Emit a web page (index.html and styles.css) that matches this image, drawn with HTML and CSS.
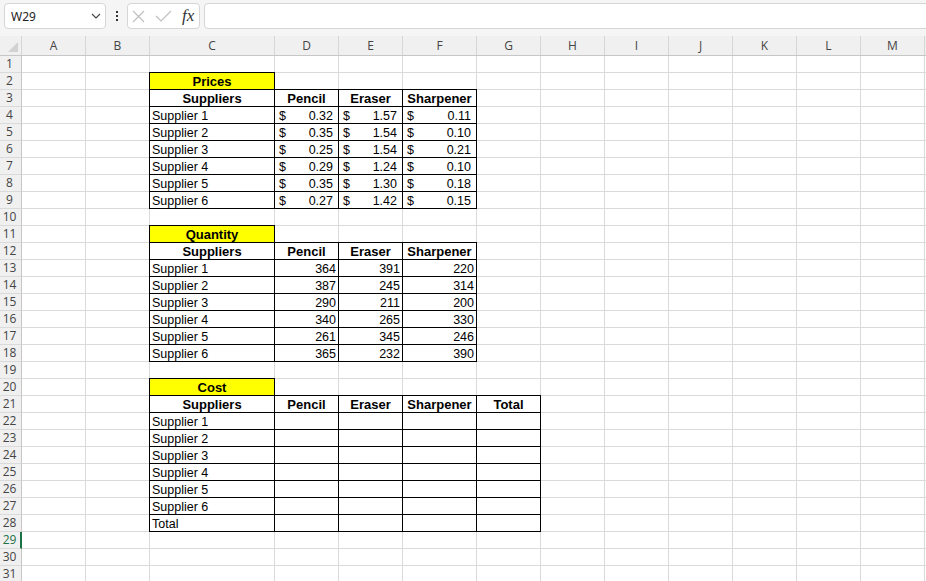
FILE: index.html
```html
<!DOCTYPE html>
<html lang="en">
<head>
<meta charset="utf-8">
<title>Suppliers</title>
<link rel="stylesheet" href="styles.css">
</head>
<body>
<div class="toolbar">
  <div class="namebox">
    <span class="ref">W29</span>
    <svg class="chev" width="10" height="6" viewBox="0 0 10 6"><path d="M1 1 L5 5 L9 1" fill="none" stroke="#444" stroke-width="1.1"/></svg>
  </div>
  <div class="kebab"><i></i><i></i><i></i></div>
  <div class="fxbox">
    <svg class="ico-x" width="13" height="13" viewBox="0 0 13 13"><path d="M1 1 L12 12 M12 1 L1 12" stroke="#bdbdbd" stroke-width="1.1" fill="none"/></svg>
    <svg class="ico-ok" width="17" height="12" viewBox="0 0 17 12"><path d="M1 6 L6 11 L16 1" stroke="#bdbdbd" stroke-width="1.1" fill="none"/></svg>
    <span class="fx">fx</span>
  </div>
  <div class="formula"></div>
</div>

<div class="colhead">
  <div class="corner"><svg width="21" height="19" viewBox="0 0 21 19"><polygon points="18,6 18,16 8,16" fill="#d2d2d2"/></svg></div>
  <div class="ch">A</div>
  <div class="ch">B</div>
  <div class="ch wide">C</div>
  <div class="ch">D</div>
  <div class="ch">E</div>
  <div class="ch mid">F</div>
  <div class="ch">G</div>
  <div class="ch">H</div>
  <div class="ch">I</div>
  <div class="ch">J</div>
  <div class="ch">K</div>
  <div class="ch">L</div>
  <div class="ch">M</div>
</div>

<div class="main">
  <div class="rowhead">
    <div class="rh">1</div><div class="rh">2</div><div class="rh">3</div><div class="rh">4</div>
    <div class="rh">5</div><div class="rh">6</div><div class="rh">7</div><div class="rh">8</div>
    <div class="rh">9</div><div class="rh">10</div><div class="rh">11</div><div class="rh">12</div>
    <div class="rh">13</div><div class="rh">14</div><div class="rh">15</div><div class="rh">16</div>
    <div class="rh">17</div><div class="rh">18</div><div class="rh">19</div><div class="rh">20</div>
    <div class="rh">21</div><div class="rh">22</div><div class="rh">23</div><div class="rh">24</div>
    <div class="rh">25</div><div class="rh">26</div><div class="rh">27</div><div class="rh">28</div>
    <div class="rh sel">29</div><div class="rh">30</div><div class="rh">31</div>
  </div>

  <div class="sheet">
    <section class="tbl">
      <div class="title">Prices</div>
      <div class="grid">
        <div class="h">Suppliers</div><div class="h">Pencil</div><div class="h">Eraser</div><div class="h">Sharpener</div>
        <div>Supplier 1</div><div class="acc"><span>$</span><span>0.32</span></div><div class="acc"><span>$</span><span>1.57</span></div><div class="acc"><span>$</span><span>0.11</span></div>
        <div>Supplier 2</div><div class="acc"><span>$</span><span>0.35</span></div><div class="acc"><span>$</span><span>1.54</span></div><div class="acc"><span>$</span><span>0.10</span></div>
        <div>Supplier 3</div><div class="acc"><span>$</span><span>0.25</span></div><div class="acc"><span>$</span><span>1.54</span></div><div class="acc"><span>$</span><span>0.21</span></div>
        <div>Supplier 4</div><div class="acc"><span>$</span><span>0.29</span></div><div class="acc"><span>$</span><span>1.24</span></div><div class="acc"><span>$</span><span>0.10</span></div>
        <div>Supplier 5</div><div class="acc"><span>$</span><span>0.35</span></div><div class="acc"><span>$</span><span>1.30</span></div><div class="acc"><span>$</span><span>0.18</span></div>
        <div>Supplier 6</div><div class="acc"><span>$</span><span>0.27</span></div><div class="acc"><span>$</span><span>1.42</span></div><div class="acc"><span>$</span><span>0.15</span></div>
      </div>
    </section>

    <section class="tbl">
      <div class="title">Quantity</div>
      <div class="grid">
        <div class="h">Suppliers</div><div class="h">Pencil</div><div class="h">Eraser</div><div class="h">Sharpener</div>
        <div>Supplier 1</div><div class="num">364</div><div class="num">391</div><div class="num">220</div>
        <div>Supplier 2</div><div class="num">387</div><div class="num">245</div><div class="num">314</div>
        <div>Supplier 3</div><div class="num">290</div><div class="num">211</div><div class="num">200</div>
        <div>Supplier 4</div><div class="num">340</div><div class="num">265</div><div class="num">330</div>
        <div>Supplier 5</div><div class="num">261</div><div class="num">345</div><div class="num">246</div>
        <div>Supplier 6</div><div class="num">365</div><div class="num">232</div><div class="num">390</div>
      </div>
    </section>

    <section class="tbl">
      <div class="title">Cost</div>
      <div class="grid five">
        <div class="h">Suppliers</div><div class="h">Pencil</div><div class="h">Eraser</div><div class="h">Sharpener</div><div class="h">Total</div>
        <div>Supplier 1</div><div></div><div></div><div></div><div></div>
        <div>Supplier 2</div><div></div><div></div><div></div><div></div>
        <div>Supplier 3</div><div></div><div></div><div></div><div></div>
        <div>Supplier 4</div><div></div><div></div><div></div><div></div>
        <div>Supplier 5</div><div></div><div></div><div></div><div></div>
        <div>Supplier 6</div><div></div><div></div><div></div><div></div>
        <div>Total</div><div></div><div></div><div></div><div></div>
      </div>
    </section>
  </div>
</div>
</body>
</html>
```

FILE: styles.css
```css
* { box-sizing: border-box; }

html, body {
  margin: 0;
  padding: 0;
}

body {
  width: 926px;
  height: 581px;
  overflow: hidden;
  background: #ffffff;
  font-family: "Liberation Sans", Arial, sans-serif;
  color: #000;
}

/* ---------- formula bar ---------- */
.toolbar {
  height: 36px;
  background: #f5f5f5;
  display: flex;
  align-items: flex-start;
  padding: 3px 0 0 4px;
}

.namebox {
  width: 102px;
  height: 26px;
  background: #fff;
  border: 1px solid #d6d6d6;
  border-radius: 4px;
  display: flex;
  align-items: center;
  justify-content: space-between;
  padding: 0 4px 0 6px;
  font-family: "Noto Sans", "Open Sans", sans-serif;
  font-size: 12px;
  color: #222;
}

.kebab {
  width: 21px;
  height: 26px;
  display: flex;
  flex-direction: column;
  align-items: center;
  justify-content: center;
  gap: 2px;
}

.kebab i {
  display: block;
  width: 2px;
  height: 2px;
  background: #333;
}

.fxbox {
  width: 73px;
  height: 26px;
  background: #fff;
  border: 1px solid #d6d6d6;
  border-radius: 4px;
  display: flex;
  align-items: center;
  padding-left: 4px;
}

.ico-x { margin-right: 10px; }
.ico-ok { margin-right: 10px; }

.fx {
  font-family: "Liberation Serif", "Times New Roman", serif;
  font-style: italic;
  font-size: 17px;
  color: #333;
  line-height: 1;
  margin-top: -2px;
}

.formula {
  flex: 1;
  height: 26px;
  margin-left: 4px;
  margin-right: -4px;
  background: #fff;
  border: 1px solid #d6d6d6;
  border-radius: 4px;
}

/* ---------- column headings ---------- */
.colhead {
  height: 20px;
  display: flex;
  background: #f0f0f0;
  border-bottom: 1px solid #c6c6c6;
}

.corner {
  width: 22px;
  height: 19px;
  flex: none;
  border-right: 1px solid #d6d6d6;
}

.corner svg { display: block; }

.ch {
  width: 64px;
  height: 19px;
  flex: none;
  border-right: 1px solid #d6d6d6;
  text-align: center;
  font-family: "Open Sans", "Noto Sans", sans-serif;
  font-size: 12px;
  line-height: 19px;
  color: #444;
}

.ch.wide { width: 125px; }
.ch.mid { width: 74px; }

/* ---------- body ---------- */
.main {
  display: flex;
  height: 525px;
  overflow: hidden;
}

.rowhead {
  width: 22px;
  flex: none;
  background: #f0f0f0;
}

.rh {
  height: 17px;
  border-bottom: 1px solid #dadada;
  border-right: 1px solid #c6c6c6;
  text-align: center;
  padding-right: 2px;
  font-family: "Open Sans", "Noto Sans", sans-serif;
  font-size: 12px;
  line-height: 16px;
  color: #444;
}

.rh.sel {
  border-right: 2px solid #1e7145;
  color: #1e7145;
  padding-right: 1px;
}

.sheet {
  flex: 1;
  padding: 16px 0 0 127px;
  display: flex;
  flex-direction: column;
  align-items: flex-start;
  gap: 16px;
  background:
    linear-gradient(#dadada, #dadada) 63px 0 / 1px 100% no-repeat,
    linear-gradient(#dadada, #dadada) 127px 0 / 1px 100% no-repeat,
    linear-gradient(#dadada, #dadada) 252px 0 / 1px 100% no-repeat,
    linear-gradient(#dadada, #dadada) 316px 0 / 1px 100% no-repeat,
    linear-gradient(#dadada, #dadada) 380px 0 / 1px 100% no-repeat,
    linear-gradient(#dadada, #dadada) 454px 0 / 1px 100% no-repeat,
    linear-gradient(#dadada, #dadada) 518px 0 / 1px 100% no-repeat,
    linear-gradient(#dadada, #dadada) 582px 0 / 1px 100% no-repeat,
    linear-gradient(#dadada, #dadada) 646px 0 / 1px 100% no-repeat,
    linear-gradient(#dadada, #dadada) 710px 0 / 1px 100% no-repeat,
    linear-gradient(#dadada, #dadada) 774px 0 / 1px 100% no-repeat,
    linear-gradient(#dadada, #dadada) 838px 0 / 1px 100% no-repeat,
    linear-gradient(#dadada, #dadada) 902px 0 / 1px 100% no-repeat,
    repeating-linear-gradient(to bottom, #ffffff 0 16px, #dadada 16px 17px);
}

/* ---------- tables ---------- */
.tbl {
  display: flex;
  flex-direction: column;
  align-items: flex-start;
  font-size: 12.5px;
}

.title {
  width: 126px;
  height: 17px;
  border: 1px solid #000;
  border-bottom: 0;
  background: #ffff00;
  text-align: center;
  font-weight: bold;
  font-size: 13px;
  line-height: 16px;
  padding-top: 1px;
}

.grid {
  display: grid;
  grid-template-columns: 125px 64px 64px 74px;
  grid-auto-rows: 17px;
  border-top: 1px solid #000;
  border-left: 1px solid #000;
}

.grid.five {
  grid-template-columns: 125px 64px 64px 74px 64px;
}

.grid > div {
  border-right: 1px solid #000;
  border-bottom: 1px solid #000;
  background: #fff;
  padding: 1px 2px 0 2px;
  line-height: 16px;
  white-space: nowrap;
}

.grid > .h {
  font-weight: bold;
  font-size: 13px;
  text-align: center;
  padding-top: 1px;
}

.grid > .acc {
  display: flex;
  justify-content: space-between;
  padding-left: 4px;
  padding-right: 5px;
}

.grid > .num {
  text-align: right;
  padding-right: 2px;
}
```
